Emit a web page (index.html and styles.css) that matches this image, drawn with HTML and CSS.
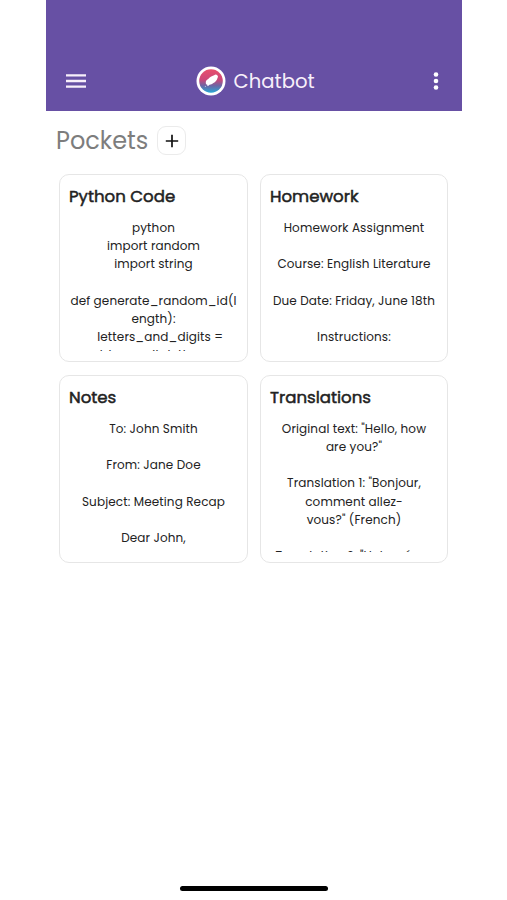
FILE: index.html
```
<!DOCTYPE html>
<html lang="en">
<head>
    <meta charset="UTF-8">
    <meta name="viewport" content="width=device-width, initial-scale=1.0">
    <title>Chatbot - Pockets</title>
    <link rel="stylesheet" href="styles.css">
</head>
<body>
    <div class="app">
        <header class="top-bar">
            <svg class="menu-icon" viewBox="0 0 20 14" aria-label="Menu">
                <path d="M0 1.3h20M0 7h20M0 12.7h20" stroke="#f8effa" stroke-width="2.3"/>
            </svg>
            <div class="brand">
                <svg class="logo" viewBox="0 0 30 30" aria-hidden="true">
                    <defs>
                        <linearGradient id="logoFill" x1="0" y1="0" x2="0" y2="1">
                            <stop offset="0" stop-color="#e94f6c"/>
                            <stop offset="0.45" stop-color="#cb4779"/>
                            <stop offset="0.7" stop-color="#6b66a5"/>
                            <stop offset="1" stop-color="#27a8d5"/>
                        </linearGradient>
                    </defs>
                    <circle cx="15" cy="15" r="14.5" fill="#fff"/>
                    <circle cx="15" cy="15" r="11.8" fill="url(#logoFill)"/>
                    <path d="M9.8 17.2c-.3-1.9.8-3.5 2.4-4.1 1.5-1.8 3.5-3.1 5.9-3.8 1-.9 2.5-1 3-.1 1.1.5 1 1.7.4 2.7-.7 2.5-2.1 4.1-4.1 5-1.5 1-2.4 1.7-3.9 1.8-.7.9-1.4 1.2-2.2 1.2.3-.7.1-1.1-.4-1.4-.5.1-.9-.5-1.1-1.3z" fill="#fff"/>
                    <circle cx="9.4" cy="20.3" r=".6" fill="#fff" opacity=".6"/>
                </svg>
                <span class="brand-name">Chatbot</span>
            </div>
            <svg class="more-icon" viewBox="0 0 6 18" aria-label="More">
                <circle cx="3" cy="2.5" r="2.3" fill="#fff"/>
                <circle cx="3" cy="9" r="2.3" fill="#fff"/>
                <circle cx="3" cy="15.5" r="2.3" fill="#fff"/>
            </svg>
        </header>

        <main>
            <div class="section-title">
                <h1>Pockets</h1>
                <button class="add-btn" aria-label="Add pocket">
                    <svg viewBox="0 0 14 14"><path d="M7 .8v12.4M.8 7h12.4" stroke="#111" stroke-width="1.7"/></svg>
                </button>
            </div>

            <div class="pockets">
                <section class="pocket">
                    <h2>Python Code</h2>
                    <div class="preview">python
import random
import string

def generate_random_id(l
ength):
    letters_and_digits =
 string.ascii_letters +</div>
                </section>
                <section class="pocket">
                    <h2>Homework</h2>
                    <div class="preview">Homework Assignment

Course: English Literature

Due Date: Friday, June 18th

Instructions:</div>
                </section>
                <section class="pocket">
                    <h2>Notes</h2>
                    <div class="preview">To: John Smith

From: Jane Doe

Subject: Meeting Recap

Dear John,</div>
                </section>
                <section class="pocket">
                    <h2>Translations</h2>
                    <div class="preview">Original text: "Hello, how
are you?"

Translation 1: "Bonjour,
comment allez-
vous?" (French)

Translation 2: "Hola, cómo</div>
                </section>
            </div>
        </main>

        <div class="home-indicator"></div>
    </div>
</body>
</html>
```
FILE: styles.css
```
* {
    box-sizing: border-box;
}

body {
    margin: 0;
    background-color: #fff;
    font-family: Poppins, Inter, sans-serif;
    color: #222;
}

.app {
    width: 416px;
    height: 900px;
    margin-left: 46px;
    display: flex;
    flex-direction: column;
}

.top-bar {
    height: 110.5px;
    flex-shrink: 0;
    padding: 51px 23px 0 20px;
    background-color: #6750a4;
    display: flex;
    align-items: center;
}

.menu-icon {
    width: 20px;
    height: 14px;
}

.more-icon {
    width: 6px;
    height: 18px;
    margin-left: auto;
}

.brand {
    display: flex;
    align-items: center;
    gap: 7.6px;
    margin-left: 110px;
}

.logo {
    width: 30px;
    height: 30px;
}

.brand-name {
    color: #f8effa;
    font-size: 19.6px;
    line-height: 30px;
    padding-top: 1px;
}

main {
    flex: 1;
}

.section-title {
    display: flex;
    align-items: center;
    gap: 9px;
    padding: 15px 0 0 10px;
    height: 45px;
}

h1 {
    margin: 0;
    color: #7d7d7d;
    font-size: 24px;
    font-weight: 400;
    line-height: 30px;
}

.add-btn {
    width: 29px;
    height: 29px;
    padding: 0;
    border: 1.5px solid #ebebeb;
    border-radius: 9px;
    background-color: #fff;
    display: flex;
    align-items: center;
    justify-content: center;
}

.add-btn svg {
    width: 14px;
    height: 14px;
}

.pockets {
    display: grid;
    grid-template-columns: 189px 188px;
    grid-auto-rows: 188px;
    gap: 13px 12px;
    padding: 18px 13px;
}

.pocket {
    padding: 9px 9px 8px 9px;
    border: 1.5px solid #e6e6e6;
    border-radius: 10px;
    overflow: hidden;
}

h2 {
    margin: 0 0 9.7px;
    font-size: 16.6px;
    font-weight: 400;
    line-height: 26px;
    -webkit-text-stroke: 0.5px #222;
}

.preview {
    height: 132.3px;
    overflow: hidden;
    font-size: 12px;
    line-height: 18.1px;
    letter-spacing: 0.12px;
    text-align: center;
    white-space: pre;
}

.home-indicator {
    width: 148px;
    height: 5px;
    margin: 0 0 9px 134px;
    border-radius: 3px;
    background-color: #000;
}
```
